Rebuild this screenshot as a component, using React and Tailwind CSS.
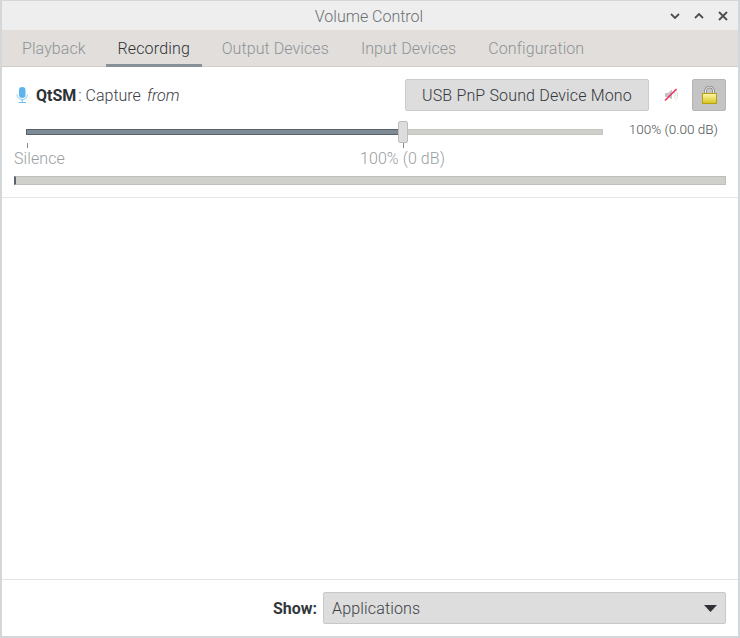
import React from "react";

const tabs = ["Playback", "Recording", "Output Devices", "Input Devices", "Configuration"];

const MicIcon = () => (
  <svg width="12" height="17" viewBox="0 0 12 17" fill="none">
    <rect x="3" y="0" width="6.5" height="11" rx="3.2" fill="#5db4ee" />
    <path d="M1 7.5c0 3 2.2 5 5.2 5s5.2-2 5.2-5" stroke="#8ccbf3" strokeWidth="1" />
    <path d="M6.2 12.5v2.5M2.5 15.5h7.4" stroke="#6dbcf0" strokeWidth="1" />
  </svg>
);

const MuteIcon = () => (
  <svg width="14" height="14" viewBox="0 0 14 14" fill="none">
    <path d="M1 5h3l4-3.5v10L4 9H1z" fill="#c4c4c4" />
    <path d="M10 3.5c1.6 2 1.6 5 0 7M12 2c2 3 2 7 0 10" stroke="#dcdcdc" strokeWidth="1" />
    <path d="M1 12.5L12.5 1" stroke="#f0305f" strokeWidth="1.6" />
  </svg>
);

const LockIcon = () => (
  <svg width="15" height="18" viewBox="0 0 15 18" fill="none">
    <defs>
      <linearGradient id="lockBody" x1="0" y1="0" x2="0" y2="1">
        <stop offset="0" stopColor="#fdf8b0" />
        <stop offset="1" stopColor="#d9c21a" />
      </linearGradient>
    </defs>
    <path d="M3.5 8V5a4 4 0 0 1 8 0v3" stroke="#7f7f7f" strokeWidth="2.6" />
    <path d="M3.5 8V5a4 4 0 0 1 8 0v3" stroke="#e6e6e6" strokeWidth="1.2" />
    <rect x="0.5" y="7.5" width="14" height="10" fill="url(#lockBody)" stroke="#b5a213" />
  </svg>
);

const App = () => {
  return (
    <div className="w-[740px] h-[638px] flex flex-col bg-white border-x-2 border-b-2 border-t border-[#d3d7d9] font-['Roboto',sans-serif] text-[#3b4045] overflow-hidden">
      <div className="h-[29px] -mx-px shrink-0 bg-[#eeeeee] flex items-center relative">
        <span className="w-full text-center text-[16px] text-[#6c7073] font-light pt-[2px] pr-[2px]">Volume Control</span>
        <div className="absolute right-[10px] top-[9px] flex items-center gap-[12px]">
          <svg width="12" height="12" viewBox="0 0 12 12" fill="none">
            <path d="M2 4l4 4 4-4" stroke="#4a4f53" strokeWidth="1.8" />
          </svg>
          <svg width="12" height="12" viewBox="0 0 12 12" fill="none">
            <path d="M2 8l4-4 4 4" stroke="#4a4f53" strokeWidth="1.8" />
          </svg>
          <svg width="12" height="12" viewBox="0 0 12 12" fill="none">
            <path d="M2 2l8 8M10 2l-8 8" stroke="#4a4f53" strokeWidth="1.8" />
          </svg>
        </div>
      </div>

      <div className="h-[37px] shrink-0 bg-[#e1dedb] border-b border-[#cfcbc6] flex pl-[8px]">
        {tabs.map((tab) => (
          <div
            key={tab}
            className={
              tab === "Recording"
                ? "w-[96px] h-[37px] mr-[8px] pt-[7px] text-center text-[16px] font-light tracking-[0.01em] text-[#2f3438] border-b-[3px] border-[#87919a]"
                : "px-[12px] mr-[8px] pt-[7px] text-[16px] font-light tracking-[0.005em] text-[#8f9397]"
            }
          >
            {tab}
          </div>
        ))}
      </div>

      <div className="px-[12px] pt-[12px] border-b border-[#e6e6e6] h-[131px] shrink-0">
        <div className="flex items-center h-[32px]">
          <div className="w-[22px] pl-[2px] flex items-center">
            <MicIcon />
          </div>
          <span className="text-[16px] font-bold text-[#2e3236] pt-[2px]">QtSM</span>
          <span className="text-[16px] font-light ml-[2px] pt-[2px]">: Capture</span>
          <span className="text-[16px] font-light italic ml-[6px] pt-[2px]">from</span>
          <button className="ml-auto w-[244px] h-[32px] pt-[2px] bg-[#dddddd] border border-[#cbcbcb] rounded-[2px] text-[16px] font-light tracking-[0.01em] text-[#33383c]">
            USB PnP Sound Device Mono
          </button>
          <div className="w-[43px] flex justify-center">
            <MuteIcon />
          </div>
          <div className="w-[34px] h-[32px] bg-[#c4c4c4] border border-[#b5b5b5] rounded-[2px] flex items-center justify-center">
            <LockIcon />
          </div>
        </div>

        <div className="flex h-[24px] mt-[10px]">
          <div className="relative w-[577px] ml-[12px] h-[24px]">
            <div className="absolute left-0 top-[8px] w-[377px] h-[6px] bg-[#7e8a94] border border-[#59626a]" />
            <div className="absolute left-[377px] top-[8px] w-[200px] h-[6px] bg-[#cfcfcc] border border-[#c4c4c1]" />
            <div className="absolute left-[372px] top-0 w-[10px] h-[22px] bg-[#dddddd] border border-[#bdbdbd] rounded-[2px]" />
            <div className="absolute left-[1px] top-[22px] w-px h-[5px] bg-[#8a8a8a]" />
            <div className="absolute left-[377px] top-[22px] w-px h-[5px] bg-[#8a8a8a]" />
          </div>
          <span className="ml-auto -mt-[2px] pr-[8px] text-[13.5px] text-[#4a4f53] font-light">100% (0.00 dB)</span>
        </div>

        <div className="relative h-[22px] mt-[2px] text-[16px] font-light tracking-[0.005em] text-[#9a9da0]">
          <span>Silence</span>
          <span className="absolute left-[346px] top-0">100% (0 dB)</span>
        </div>

        <div className="mt-[7px] h-[9px] bg-[#cfcfcc] border border-[#bdbdba] border-l-[2px] border-l-[#59626a]" />
      </div>

      <div className="flex-1" />

      <div className="h-[57px] shrink-0 border-t border-[#e2e2e2] flex items-center justify-end pr-[12px]">
        <span className="text-[16px] font-bold text-[#33383c] mr-[6px] pt-[2px]">Show:</span>
        <div className="w-[403px] h-[32px] bg-[#dddddd] border border-[#c8c8c8] rounded-[2px] flex items-center justify-between pl-[8px] pr-[8px]">
          <span className="text-[16px] font-light tracking-[0.01em] text-[#3b4045] pt-[2px]">Applications</span>
          <svg width="13" height="7" viewBox="0 0 13 7">
            <path d="M0 0h13L6.5 7z" fill="#2e3236" />
          </svg>
        </div>
      </div>
    </div>
  );
};

export default App;
